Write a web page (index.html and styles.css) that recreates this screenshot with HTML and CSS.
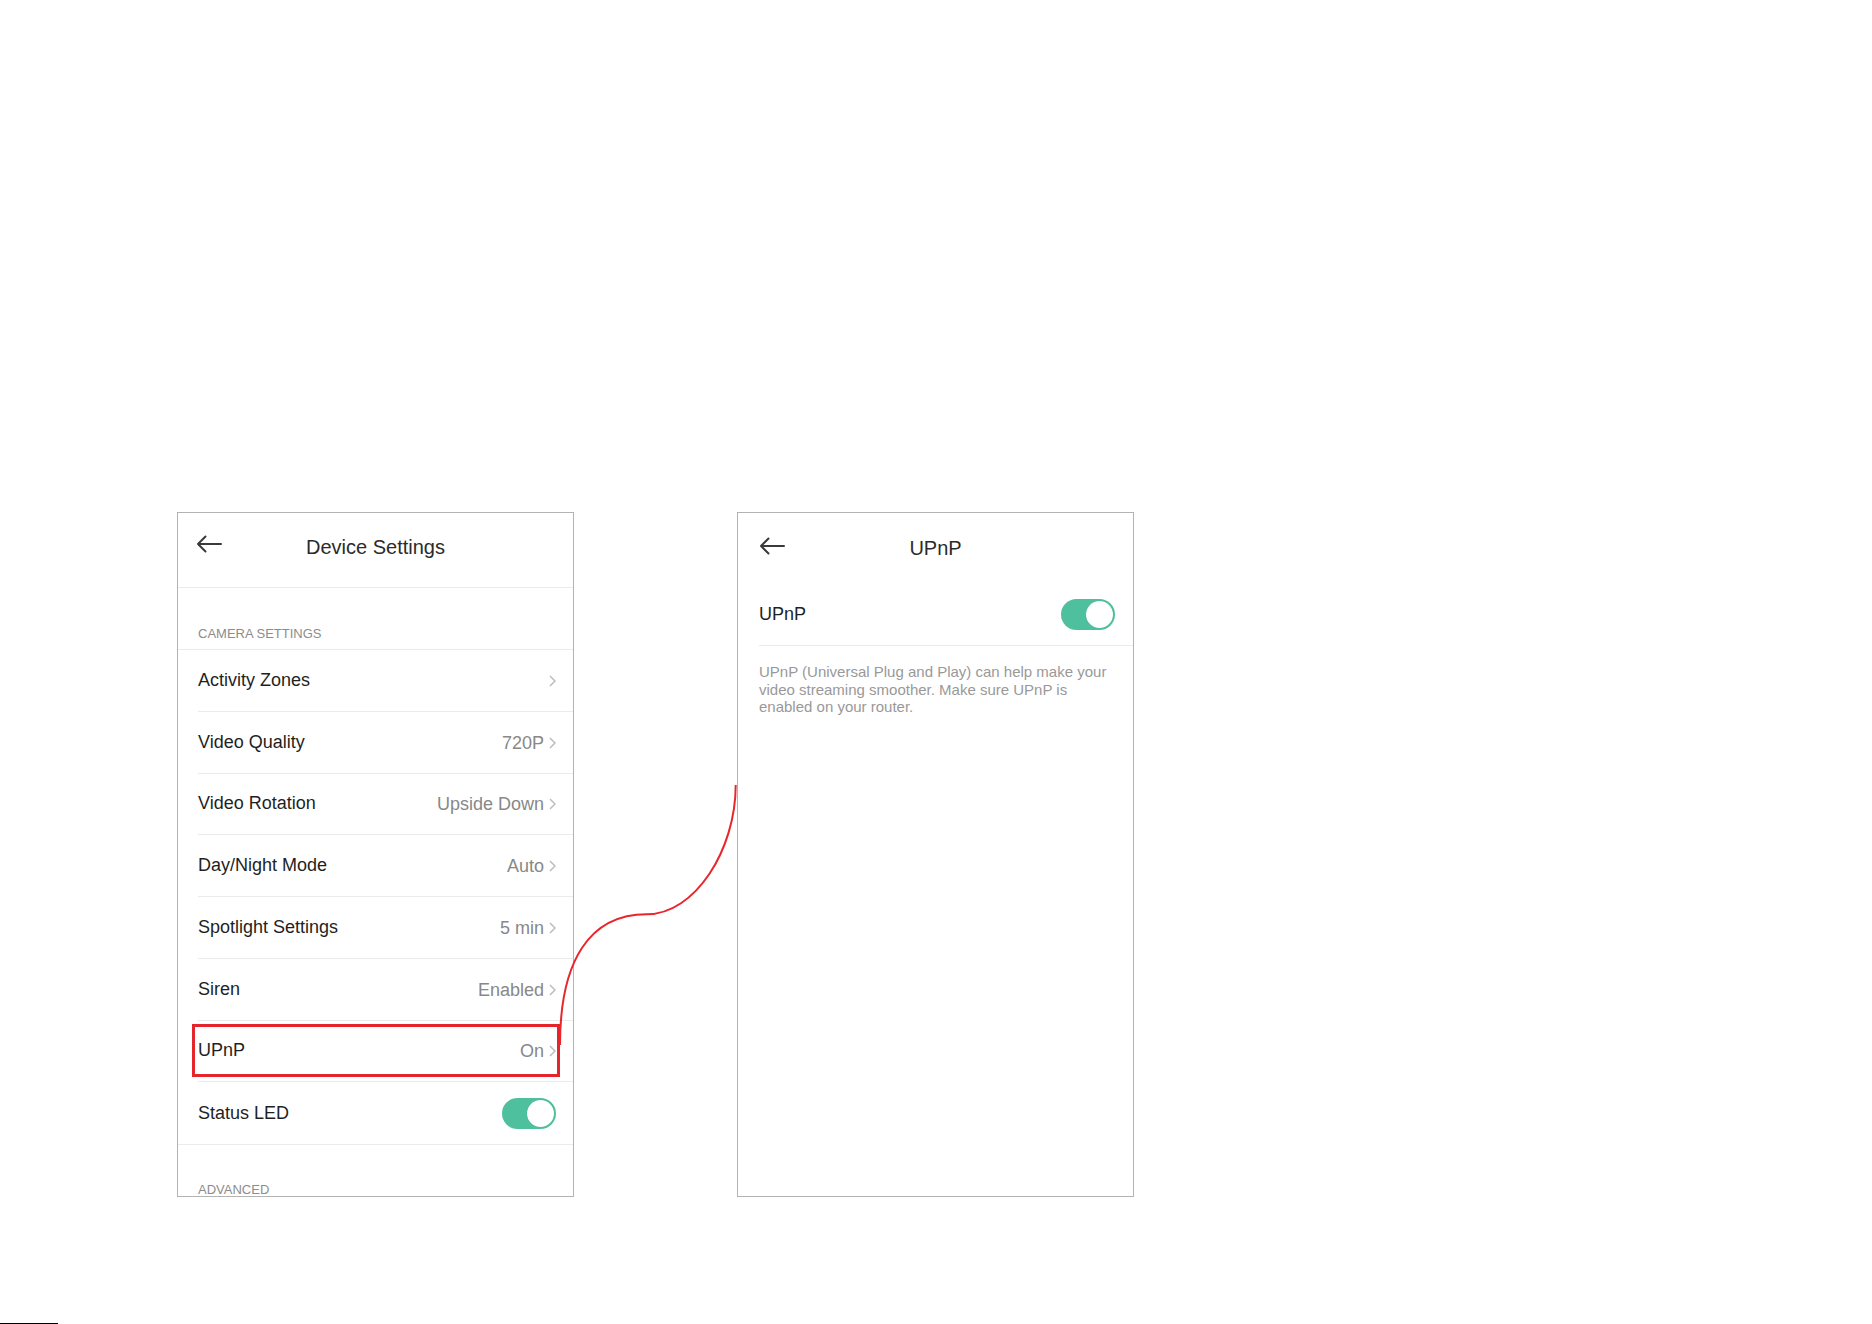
FILE: index.html
```html
<!DOCTYPE html>
<html lang="en">
<head>
<meta charset="utf-8">
<title>Device Settings – UPnP</title>
<link rel="stylesheet" href="styles.css">
</head>
<body>
<div class="stage">
  <div class="screens">
    <section class="phone">
      <header class="topbar">
        <span class="back">
          <svg width="26" height="18" viewBox="0 0 26 18"><path d="M25 9H2M9.5 1.5L2 9l7.5 7.5" fill="none" stroke="#3a3a3a" stroke-width="2" stroke-linecap="round" stroke-linejoin="round"/></svg>
        </span>
        <h1 class="title">Device Settings</h1>
        <span></span>
      </header>

      <div class="section-label">CAMERA SETTINGS</div>
      <div class="list">
        <div class="row"><span class="label">Activity Zones</span><span class="value"><svg class="chev" width="7" height="12" viewBox="0 0 7 12"><path d="M1 1l5 5-5 5" fill="none" stroke="#bdbdbd" stroke-width="1.5"/></svg></span></div>
        <div class="row"><span class="label">Video Quality</span><span class="value">720P<svg class="chev" width="7" height="12" viewBox="0 0 7 12"><path d="M1 1l5 5-5 5" fill="none" stroke="#bdbdbd" stroke-width="1.5"/></svg></span></div>
        <div class="row"><span class="label">Video Rotation</span><span class="value">Upside Down<svg class="chev" width="7" height="12" viewBox="0 0 7 12"><path d="M1 1l5 5-5 5" fill="none" stroke="#bdbdbd" stroke-width="1.5"/></svg></span></div>
        <div class="row"><span class="label">Day/Night Mode</span><span class="value">Auto<svg class="chev" width="7" height="12" viewBox="0 0 7 12"><path d="M1 1l5 5-5 5" fill="none" stroke="#bdbdbd" stroke-width="1.5"/></svg></span></div>
        <div class="row"><span class="label">Spotlight Settings</span><span class="value">5 min<svg class="chev" width="7" height="12" viewBox="0 0 7 12"><path d="M1 1l5 5-5 5" fill="none" stroke="#bdbdbd" stroke-width="1.5"/></svg></span></div>
        <div class="row"><span class="label">Siren</span><span class="value">Enabled<svg class="chev" width="7" height="12" viewBox="0 0 7 12"><path d="M1 1l5 5-5 5" fill="none" stroke="#bdbdbd" stroke-width="1.5"/></svg></span></div>
        <div class="row is-marked"><span class="label">UPnP</span><span class="value">On<svg class="chev" width="7" height="12" viewBox="0 0 7 12"><path d="M1 1l5 5-5 5" fill="none" stroke="#bdbdbd" stroke-width="1.5"/></svg></span></div>
        <div class="row"><span class="label">Status LED</span><span class="switch on"><span class="knob"></span></span></div>
      </div>
      <div class="section-label section-label--low">ADVANCED</div>
    </section>

    <section class="phone">
      <header class="topbar topbar--plain">
        <span class="back back--wide">
          <svg width="26" height="18" viewBox="0 0 26 18"><path d="M25 9H2M9.5 1.5L2 9l7.5 7.5" fill="none" stroke="#3a3a3a" stroke-width="2" stroke-linecap="round" stroke-linejoin="round"/></svg>
        </span>
        <h1 class="title">UPnP</h1>
        <span></span>
      </header>
      <div class="row row--single"><span class="label">UPnP</span><span class="switch on"><span class="knob"></span></span></div>
      <p class="note">UPnP (Universal Plug and Play) can help make your video streaming smoother. Make sure UPnP is enabled on your router.</p>
    </section>

    <svg class="link" width="1872" height="1324" viewBox="0 0 1872 1324">
      <path d="M560 1045C560 960 590 914.3 646.7 914.3C695 914.3 735.7 850 735.7 785" fill="none" stroke="#e8262c" stroke-width="2"/>
    </svg>
  </div>
  <div class="scanline"></div>
</div>
</body>
</html>
```

FILE: styles.css
```css
* { box-sizing: border-box; }

html, body {
  margin: 0;
  padding: 0;
  background: #ffffff;
}

body {
  font-family: "Liberation Sans", Arial, "Helvetica Neue", sans-serif;
  color: #222;
}

.stage {
  position: relative;
  width: 1872px;
  height: 1324px;
  display: flex;
  flex-direction: column;
  overflow: hidden;
}

.screens {
  display: flex;
  gap: 163px;
  padding: 512px 0 0 177px;
}

/* the overlay spans the whole stage so its coordinates are page pixels */
.link {
  position: absolute;
  left: 0;
  top: 0;
  pointer-events: none;
}

.phone {
  width: 397px;
  height: 685px;
  border: 1px solid #b3b3b3;
  background: #fff;
  overflow: hidden;
  display: flex;
  flex-direction: column;
}

/* ---------- header ---------- */
.topbar {
  flex: none;
  height: 75px;
  display: grid;
  grid-template-columns: 1fr auto 1fr;
  align-items: center;
  padding: 0 18px 7px 18px;
  border-bottom: 1px solid #ebebeb;
}

.topbar--plain {
  height: 70px;
  padding: 0 21px 0 21px;
  border-bottom: none;
}

.back {
  display: flex;
  align-items: center;
  margin-bottom: 5px;
}

.back--wide {
  margin-bottom: 4px;
}

.title {
  margin: 0;
  font-size: 20px;
  font-weight: normal;
  color: #2b2b2b;
  line-height: 24px;
}

/* ---------- section labels ---------- */
.section-label {
  flex: none;
  height: 62px;
  display: flex;
  align-items: flex-end;
  padding: 0 0 8px 20px;
  font-size: 13px;
  line-height: 15px;
  color: #8c8c8c;
  border-bottom: 1px solid #ebebeb;
}

.section-label--low {
  padding-bottom: 10px;
  border-bottom: none;
}

/* ---------- list rows ---------- */
.list {
  flex: none;
  border-bottom: 1px solid #ebebeb;
}

.row {
  position: relative;
  height: 61.75px;
  margin-left: 20px;
  padding-right: 17px;
  display: flex;
  align-items: center;
  justify-content: space-between;
  border-bottom: 1px solid #ebebeb;
}

.list .row:last-child {
  border-bottom: none;
}

.row--single {
  flex: none;
  height: 63px;
  margin-left: 21px;
  padding-right: 18px;
}

.label {
  font-size: 18px;
  color: #1f1f1f;
}

.value {
  display: flex;
  align-items: center;
  font-size: 18px;
  color: #888;
  padding-top: 2px;
}

.chev {
  margin-left: 5px;
  margin-top: -1px;
}

/* highlighted row */
.is-marked::after {
  content: "";
  position: absolute;
  left: -6px;
  right: 13px;
  top: 3px;
  bottom: 4px;
  border: 3px solid #e5252c;
}

/* ---------- switch ---------- */
.switch {
  position: relative;
  width: 54px;
  height: 31px;
  border-radius: 16px;
  background: #4fc09e;
  flex: none;
}

.switch .knob {
  position: absolute;
  top: 2px;
  right: 2px;
  width: 27px;
  height: 27px;
  border-radius: 50%;
  background: #fff;
  box-shadow: 0 0 1px rgba(0, 0, 0, 0.15);
}

/* ---------- helper text ---------- */
.note {
  margin: 0;
  padding: 17px 14px 0 21px;
  font-size: 15px;
  line-height: 17.5px;
  color: #999;
}

.scanline {
  margin-top: auto;
  width: 58px;
  height: 1px;
  background: #000;
}
```
